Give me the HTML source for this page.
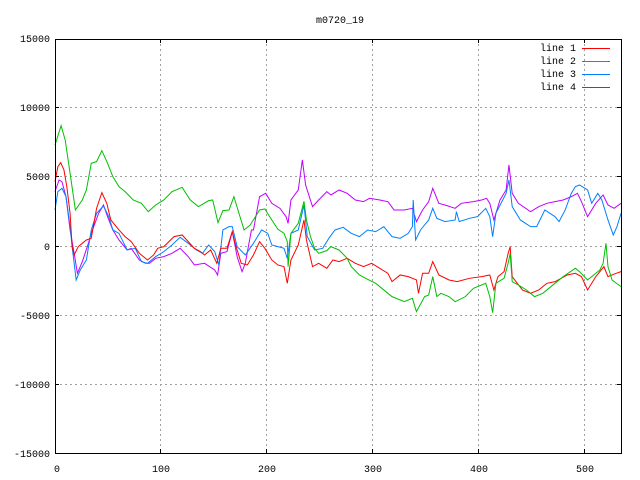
<!DOCTYPE html>
<html><head><meta charset="utf-8"><style>
html,body{margin:0;padding:0;background:#fff;}
svg{display:block;font-family:"Liberation Mono",monospace;font-size:10px;}
</style></head><body>
<svg width="640" height="480" viewBox="0 0 640 480" xmlns="http://www.w3.org/2000/svg">
<rect width="640" height="480" fill="#fff"/>
<text x="340" y="23" text-anchor="middle" fill="#000">m0720_19</text>
<g stroke="#a0a0a0" stroke-width="1" stroke-dasharray="2,3" fill="none">
<line x1="55" y1="107.5" x2="621" y2="107.5"/>
<line x1="55" y1="176.5" x2="621" y2="176.5"/>
<line x1="55" y1="246.5" x2="621" y2="246.5"/>
<line x1="55" y1="315.5" x2="621" y2="315.5"/>
<line x1="55" y1="384.5" x2="621" y2="384.5"/>
<line x1="160.5" y1="39" x2="160.5" y2="453"/>
<line x1="266.5" y1="39" x2="266.5" y2="453"/>
<line x1="372.5" y1="39" x2="372.5" y2="453"/>
<line x1="478.5" y1="39" x2="478.5" y2="453"/>
<line x1="584.5" y1="39" x2="584.5" y2="453"/>
</g>
<g stroke="#000" stroke-width="1">
<path d="M55 107.5h4M55 176.5h4M55 246.5h4M55 315.5h4M55 384.5h4M621 107.5h-4M621 176.5h-4M621 246.5h-4M621 315.5h-4M621 384.5h-4M160.5 453v-4M266.5 453v-4M372.5 453v-4M478.5 453v-4M584.5 453v-4M160.5 39v4M266.5 39v4M372.5 39v4M478.5 39v4M584.5 39v4"/>
</g>
<g fill="#000" text-anchor="end">
<text x="50" y="42">15000</text>
<text x="50" y="111">10000</text>
<text x="50" y="180">5000</text>
<text x="50" y="250">0</text>
<text x="50" y="319">-5000</text>
<text x="50" y="388">-10000</text>
<text x="50" y="457">-15000</text>
</g>
<g fill="#000" text-anchor="middle">
<text x="57" y="472">0</text>
<text x="161" y="472">100</text>
<text x="267" y="472">200</text>
<text x="373" y="472">300</text>
<text x="479" y="472">400</text>
<text x="585" y="472">500</text>
</g>
<g fill="#000" text-anchor="end">
<text x="576" y="51">line 1</text>
<text x="576" y="64">line 2</text>
<text x="576" y="77">line 3</text>
<text x="576" y="90">line 4</text>
</g>
<line x1="582" y1="48.5" x2="610" y2="48.5" stroke="#ff0000"/>
<line x1="582" y1="61.5" x2="610" y2="61.5" stroke="#00c000"/>
<line x1="582" y1="74.5" x2="610" y2="74.5" stroke="#0080ff"/>
<line x1="582" y1="87.5" x2="610" y2="87.5" stroke="#c000ff"/>
<g transform="translate(55,0) scale(0.4075,0.3333) translate(-133,0)" fill="none">
<polyline vector-effect="non-scaling-stroke" stroke="#c000ff" points="133,575 143,540 150,545 160,590 170,690 180,760 188,820 200,785 215,730 222,700 240,640 252,615 262,650 275,690 290,720 310,750 320,745 340,780 355,790 365,790 380,775 400,770 420,760 440,745 460,770 475,795 500,790 525,810 532,825 540,760 555,755 568,695 580,770 592,815 600,790 615,690 620,690 635,590 650,580 665,610 685,625 700,650 705,670 712,600 730,570 740,480 748,555 765,620 780,600 800,575 810,585 830,570 850,580 870,600 890,605 905,595 930,600 950,605 965,630 990,630 1010,625 1020,665 1035,630 1050,605 1060,565 1075,610 1090,615 1115,625 1130,610 1160,605 1180,600 1192,595 1200,610 1210,660 1225,600 1240,570 1247,495 1255,580 1270,610 1300,635 1320,620 1340,610 1360,605 1380,600 1400,590 1415,580 1425,605 1440,650 1460,610 1478,585 1490,615 1505,625 1522,610"/>
<polyline vector-effect="non-scaling-stroke" stroke="#0080ff" points="133,630 140,575 150,565 160,590 170,680 176,750 185,840 195,810 210,780 222,690 235,640 252,618 265,650 275,690 290,700 310,750 330,745 345,785 360,790 380,770 400,755 420,735 440,712 460,730 480,750 495,760 510,735 525,755 535,795 545,690 560,680 568,680 580,740 600,765 620,730 640,690 655,700 665,735 680,740 695,745 703,775 712,700 730,690 744,615 752,710 770,750 790,745 805,715 820,690 840,682 860,700 880,710 900,690 920,695 940,680 960,710 980,715 1000,700 1010,680 1012,600 1018,720 1030,690 1050,660 1060,625 1070,655 1090,665 1115,660 1118,635 1125,665 1150,655 1170,650 1190,625 1200,650 1207,710 1215,640 1240,580 1247,540 1255,620 1275,660 1300,680 1315,680 1335,630 1360,650 1370,665 1385,630 1400,580 1410,560 1420,555 1440,570 1450,610 1465,580 1475,600 1490,660 1503,705 1512,680 1522,640"/>
<polyline vector-effect="non-scaling-stroke" stroke="#ff0000" points="133,545 140,500 147,488 155,510 162,560 170,640 175,740 180,765 190,740 200,730 210,720 222,715 235,625 248,578 260,610 270,660 290,690 305,710 320,725 340,760 360,780 375,765 385,745 400,740 425,710 445,705 460,725 475,745 490,755 500,765 515,750 530,790 540,745 555,745 568,695 575,730 590,790 605,795 620,765 635,725 648,745 665,780 680,795 695,800 703,850 712,780 730,735 744,660 750,720 765,800 780,790 800,805 815,780 830,785 850,775 870,790 890,800 910,790 930,805 950,820 960,845 980,825 1000,830 1020,840 1025,880 1035,820 1050,820 1060,785 1075,825 1100,840 1120,845 1150,835 1180,830 1200,825 1210,870 1220,830 1235,815 1245,760 1250,740 1255,830 1280,870 1300,880 1320,870 1340,850 1360,845 1390,825 1410,820 1425,830 1440,870 1460,830 1480,800 1490,830 1510,820 1522,815"/>
<polyline vector-effect="non-scaling-stroke" stroke="#00c000" points="133,435 148,377 158,420 170,520 183,630 200,600 210,570 222,490 235,485 248,452 262,490 275,530 290,560 305,575 325,600 345,610 362,635 380,615 400,600 420,575 445,562 465,600 485,620 510,602 520,600 533,668 545,632 560,630 572,590 582,630 597,690 612,675 635,630 648,627 665,660 680,688 695,700 703,725 705,800 712,700 730,670 744,604 750,660 760,710 770,745 780,760 800,752 810,740 830,750 850,775 860,800 880,825 900,838 920,850 935,865 960,890 990,905 1010,895 1020,935 1040,890 1050,885 1060,830 1070,890 1080,880 1100,890 1115,905 1140,890 1160,865 1190,850 1200,890 1207,938 1215,850 1235,835 1245,790 1250,760 1255,845 1270,855 1290,870 1310,890 1330,880 1360,850 1380,830 1410,805 1420,815 1440,840 1450,830 1470,810 1478,790 1485,730 1490,800 1500,840 1522,860"/>
</g>
<rect x="55.5" y="39.5" width="566" height="414" fill="none" stroke="#000" stroke-width="1"/>
</svg>
</body></html>
